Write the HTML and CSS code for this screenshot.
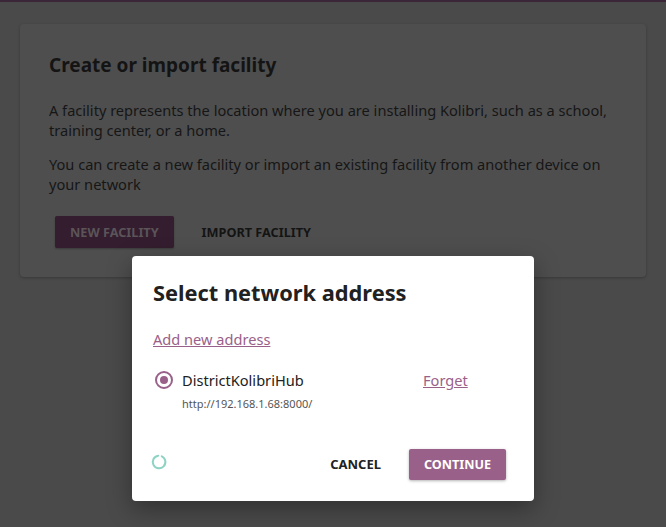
FILE: index.html
```html
<!DOCTYPE html>
<html>
<head>
<meta charset="utf-8">
<link rel="stylesheet" href="styles.css">
</head>
<body>
<div class="topbar"></div>
<div class="card">
  <h1 class="card-title">Create or import facility</h1>
  <p class="p1">A facility represents the location where you are installing Kolibri, such as a school, training center, or a home.</p>
  <p class="p2">You can create a new facility or import an existing facility from another device on your network</p>
  <div class="actions">
    <span class="btn-raised-dim">NEW FACILITY</span>
    <span class="btn-flat-dim">IMPORT FACILITY</span>
  </div>
</div>
<div class="modal">
  <h2 class="modal-title">Select network address</h2>
  <a class="link add-link">Add new address</a>
  <div class="address-row">
    <div class="radio-col">
      <div class="radio-line">
        <span class="radio"><span class="radio-dot"></span></span>
        <span class="addr-name">DistrictKolibriHub</span>
      </div>
      <div class="addr-url">http://192.168.1.68:8000/</div>
    </div>
    <a class="link forget">Forget</a>
  </div>
  <div class="footer">
    <svg class="spinner" width="18" height="18" viewBox="0 0 18 18"><path d="M11.8 3.3 A6.3 6.3 0 1 1 8.2 2.75" fill="none" stroke="#8dd3c3" stroke-width="2" stroke-linecap="round"/></svg>
    <div class="footer-btns">
      <span class="btn-flat">CANCEL</span>
      <span class="btn-raised">CONTINUE</span>
    </div>
  </div>
</div>
</body>
</html>
```
FILE: styles.css
```css
html, body {
  margin: 0;
  padding: 0;
}
body {
  background: #4a4a4a;
  font-family: "Noto Sans", sans-serif;
  width: 666px;
  height: 527px;
  overflow: hidden;
  position: relative;
}
.topbar {
  height: 2px;
  background: #3a2636;
}
.card {
  margin: 22px 20px 0 20px;
  height: 253px;
  box-sizing: border-box;
  background: #4e4e4e;
  border-radius: 4px;
  box-shadow: 0 1px 3px rgba(0,0,0,0.25);
  padding: 27px 29px 0 29px;
}
.card-title {
  margin: 0;
  font-size: 19px;
  line-height: 28px;
  font-weight: 700;
  color: #141414;
}
.card p {
  margin: 0;
  font-size: 14.6px;
  line-height: 20px;
  color: #161616;
}
.p1 { margin-top: 21px !important; }
.p2 { margin-top: 14px !important; }
.actions {
  margin-top: 22px;
  margin-left: 6px;
  display: flex;
  gap: 12px;
}
.btn-raised-dim {
  height: 32px;
  line-height: 32px;
  padding: 0 15px;
  background: #331d2e;
  border-radius: 2px;
  color: #5b5459;
  font-size: 12.7px;
  font-weight: 700;
  box-shadow: 0 1px 2px rgba(0,0,0,0.25);
}
.btn-flat-dim {
  height: 32px;
  line-height: 32px;
  padding: 0 16px;
  color: #141414;
  font-size: 12.7px;
  font-weight: 700;
}
.modal {
  position: absolute;
  left: 132px;
  top: 256px;
  width: 402px;
  height: 245px;
  box-sizing: border-box;
  background: #fff;
  border-radius: 4px;
  box-shadow: 0 8px 24px rgba(0,0,0,0.35);
  padding: 21px 28px 0 21px;
  display: flex;
  flex-direction: column;
}
.modal-title {
  margin: 0;
  font-size: 21.8px;
  line-height: 32px;
  font-weight: 700;
  color: #212121;
}
.link {
  color: #996189;
  text-decoration: underline;
  font-size: 14.6px;
  line-height: 20px;
}
.add-link {
  margin-top: 20px;
  align-self: flex-start;
}
.address-row {
  margin-top: 21px;
  display: grid;
  grid-template-columns: 270px auto;
  align-items: start;
}
.radio-line {
  display: flex;
  align-items: center;
  height: 22px;
  margin-top: -1px;
}
.radio {
  width: 18px;
  height: 18px;
  box-sizing: border-box;
  border: 2px solid #996189;
  border-radius: 50%;
  display: flex;
  align-items: center;
  justify-content: center;
  margin-left: 2px;
  margin-right: 9px;
}
.radio-dot {
  width: 8px;
  height: 8px;
  border-radius: 50%;
  background: #996189;
}
.addr-name {
  font-size: 14.6px;
  color: #212121;
}
.addr-url {
  margin-top: 5px;
  margin-left: 29px;
  font-size: 11px;
  line-height: 16px;
  color: #555;
}
.forget {
  line-height: 22px;
  margin-top: -1px;
  justify-self: start;
}
.footer {
  margin-top: 36px;
  display: flex;
  align-items: center;
  justify-content: space-between;
}
.spinner {
  margin-left: -3px;
  margin-top: -4px;
}
.footer-btns {
  display: flex;
  gap: 12px;
  align-items: center;
}
.btn-flat {
  height: 32px;
  line-height: 32px;
  padding: 0 16px;
  color: #212121;
  font-size: 13px;
  font-weight: 700;
}
.btn-raised {
  height: 31px;
  line-height: 31px;
  padding: 0 15px;
  background: #996189;
  border-radius: 2px;
  color: #fff;
  font-size: 12.6px;
  font-weight: 700;
  box-shadow: 0 1px 3px rgba(0,0,0,0.3);
}
```
